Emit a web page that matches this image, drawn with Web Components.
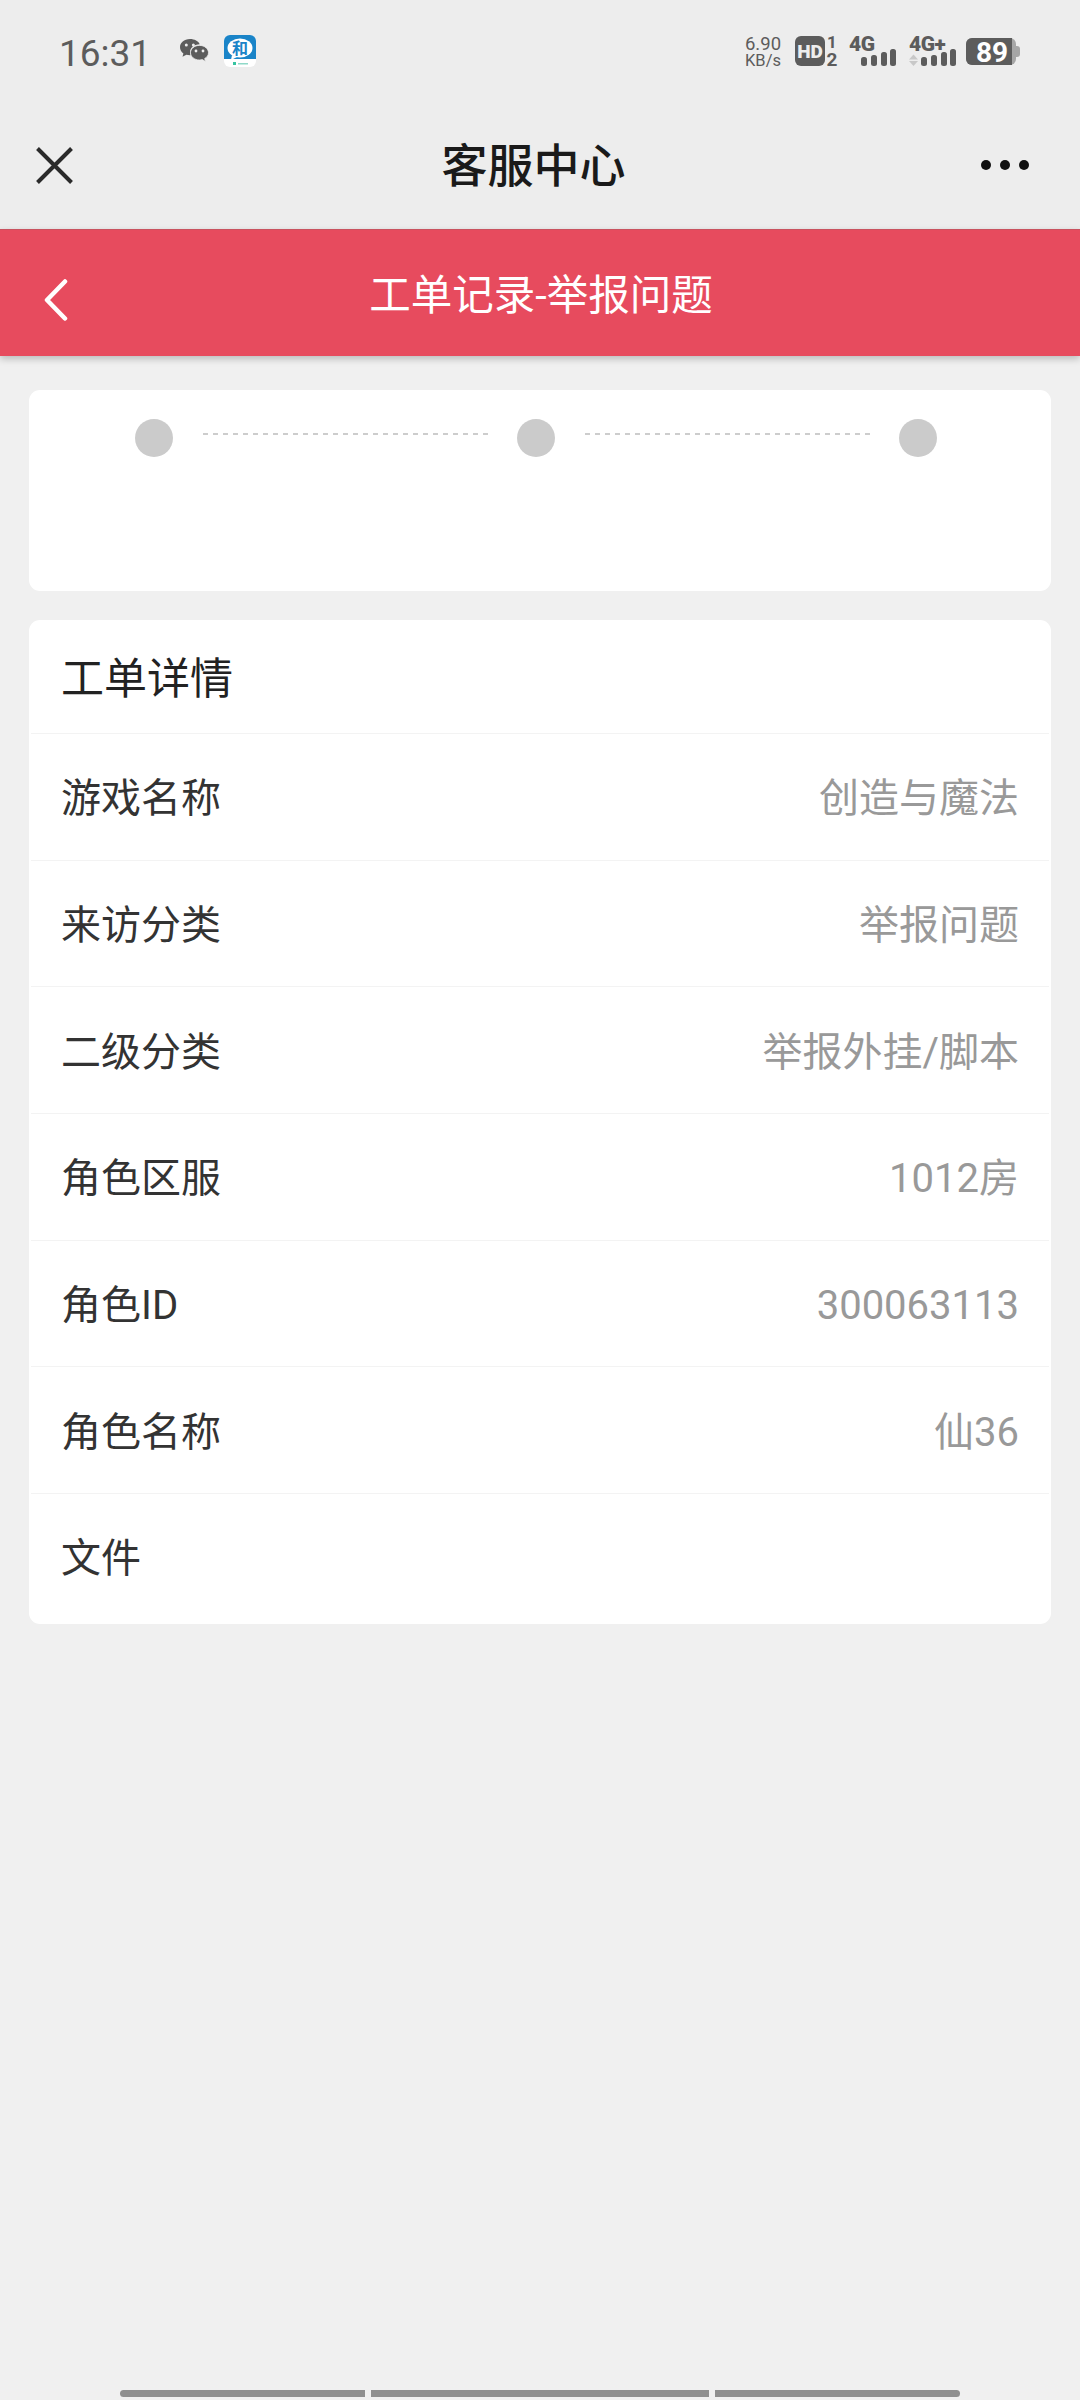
<!DOCTYPE html>
<html lang="zh-CN">
<head>
<meta charset="utf-8">
<title>客服中心</title>
<style>
  html, body { margin: 0; padding: 0; }
  body {
    width: 1080px;
    height: 2400px;
    overflow: hidden;
    background: #f0f0f0;
    font-family: Roboto, "Noto Sans CJK SC", sans-serif;
    display: flex;
    flex-direction: column;
  }
</style>
</head>
<body>

<template id="status-bar-template">
  <style>
    :host {
      display: flex;
      align-items: flex-start;
      height: 110px;
      box-sizing: border-box;
      padding: 35px 60px 0 60px;
      background: #ededed;
      color: #5c5c5c;
    }
    .time { font-size: 37px; line-height: 38px; width: 120px; margin-left: -1px; }
    .icons { display: flex; align-items: flex-start; }
    .wechat { width: 30px; height: 26px; margin: 4px 15px 0 0; }
    .hemu { width: 32px; height: 32px; }
    .right { margin-left: auto; width: 276px; height: 32px; }
    svg { display: block; overflow: visible; }
    text { font-family: Roboto, "Noto Sans CJK SC", sans-serif; }
  </style>
  <div class="time">16:31</div>
  <div class="icons">
    <svg class="wechat" viewBox="0 0 30 26">
      <path d="M11 0C5 0 1 3.700 1 8.200c0 2.600 1.400 4.700 3.400 6.200l-.9 3.400 3.900-2.100c1.100.3 2.200.5 3.500.5h.7c-.4-1-.5-1.800-.5-2.700C10.600 9 15 5.400 20.700 5.200 19.400 2.100 15.500 0 11 0z" fill="#5c5c5c"/>
      <circle cx="7.300" cy="6" r="1.500" fill="#ededed"/>
      <circle cx="14.400" cy="6" r="1.500" fill="#ededed"/>
      <path d="M20.500 6.400c-5.100 0-9 3.300-9 7.300s3.900 7.300 9 7.300c1 0 1.900-.1 2.800-.4l3.200 1.900-.8-3c2.500-1.300 3.800-3.400 3.800-5.800 0-4-3.900-7.300-9-7.300z" fill="#5c5c5c" stroke="#ededed" stroke-width=".8"/>
      <circle cx="17" cy="12" r="1.400" fill="#ededed"/>
      <circle cx="24" cy="12" r="1.400" fill="#ededed"/>
    </svg>
    <svg class="hemu" viewBox="0 0 32 32">
      <rect width="32" height="32" rx="6" fill="#ffffff"/>
      <path d="M0 6a6 6 0 0 1 6-6h20a6 6 0 0 1 6 6v18H0z" fill="#1a84c8"/>
      <ellipse cx="16" cy="13" rx="12.500" ry="9.500" fill="#fff"/>
      <path d="M8 20l-1 5 6-3z" fill="#fff"/>
      <text x="16" y="19" font-size="16" font-weight="700" fill="#1a84c8" text-anchor="middle">和</text>
      <rect x="9" y="27" width="3" height="3" fill="#37c4a0"/>
      <rect x="14" y="28" width="10" height="1.500" fill="#8fd9c8"/>
    </svg>
  </div>
  <svg class="right" viewBox="0 0 276 32">
    <text x="19" y="15" font-size="18.500" text-anchor="middle" fill="#5c5c5c">6.90</text>
    <text x="19" y="31" font-size="16.500" text-anchor="middle" fill="#5c5c5c">KB/s</text>

    <rect x="51" y="1" width="30" height="30" rx="6" fill="#5c5c5c"/>
    <text x="66" y="22.500" font-size="19" font-weight="900" text-anchor="middle" fill="#ededed">HD</text>
    <text x="88" y="13" font-size="17" font-weight="700" text-anchor="middle" fill="#5c5c5c">1</text>
    <text x="88" y="31" font-size="19" font-weight="700" text-anchor="middle" fill="#5c5c5c">2</text>

    <text x="105" y="16" font-size="21" font-weight="900" fill="#5c5c5c" letter-spacing="-.5">4G</text>
    <rect x="117" y="22" width="6" height="9" rx="2.500" fill="#5c5c5c"/>
    <rect x="127" y="20" width="6" height="11" rx="2.500" fill="#5c5c5c"/>
    <rect x="137" y="17" width="6" height="14" rx="2.500" fill="#5c5c5c"/>
    <rect x="146" y="14" width="6" height="17" rx="2.500" fill="#5c5c5c"/>

    <text x="165" y="16" font-size="21" font-weight="900" fill="#5c5c5c" letter-spacing="-.5">4G+</text>
    <path d="M165 24.500l4.500-5 4.500 5z" fill="#c8c8c8"/>
    <path d="M165 26l4.500 5 4.500-5z" fill="#c8c8c8"/>
    <rect x="177" y="22" width="6" height="9" rx="2.500" fill="#5c5c5c"/>
    <rect x="187" y="20" width="6" height="11" rx="2.500" fill="#5c5c5c"/>
    <rect x="197" y="17" width="6" height="14" rx="2.500" fill="#5c5c5c"/>
    <rect x="206" y="14" width="6" height="17" rx="2.500" fill="#5c5c5c"/>

    <rect x="222" y="3" width="50" height="27" rx="6" fill="#a6a6a6"/>
    <path d="M228 3h40v27h-40a6 6 0 0 1-6-6V9a6 6 0 0 1 6-6z" fill="#5c5c5c"/>
    <path d="M272 11h1a3 3 0 0 1 3 3v5a3 3 0 0 1-3 3h-1z" fill="#a6a6a6"/>
    <text x="248" y="27" font-size="28" font-weight="700" text-anchor="middle" fill="#fff">89</text>
  </svg>
</template>

<template id="nav-bar-template">
  <style>
    :host {
      display: flex;
      align-items: center;
      justify-content: space-between;
      height: 119px;
      box-sizing: border-box;
      padding: 0 51px 9px 36px;
      background: #ededed;
    }
    .title {
      font-size: 46px;
      font-weight: 500;
      line-height: 60px;
      color: #1a1a1a;
      margin: 2px 0 0 13px;
    }
    svg { display: block; }
  </style>
  <svg width="37" height="37" viewBox="0 0 37 37">
    <path d="M1.500 1.500l34 34M35.500 1.500l-34 34" stroke="#2a2a2a" stroke-width="4" fill="none"/>
  </svg>
  <div class="title"><slot></slot></div>
  <svg width="48" height="10" viewBox="0 0 48 10">
    <circle cx="5" cy="5" r="5" fill="#111"/>
    <circle cx="24" cy="5" r="5" fill="#111"/>
    <circle cx="43" cy="5" r="5" fill="#111"/>
  </svg>
</template>

<template id="page-header-template">
  <style>
    :host {
      display: flex;
      align-items: center;
      justify-content: center;
      position: relative;
      height: 127px;
      background: #e74b5e;
      box-shadow: 0 3px 7px rgba(0, 0, 0, 0.22), inset 0 1px 0 #c9525f;
      color: #fff;
    }
    .back { position: absolute; left: 44px; top: 50px; display: block; }
    .title { font-size: 41.500px; line-height: 56px; margin: 6px 0 0 2px; }
  </style>
  <svg class="back" width="24" height="42" viewBox="0 0 24 42">
    <path d="M21 2.500L3 21l18 18.500" stroke="#fff" stroke-width="4.500" stroke-linecap="round" stroke-linejoin="round" fill="none"/>
  </svg>
  <div class="title"><slot></slot></div>
</template>

<template id="step-card-template">
  <style>
    :host {
      display: flex;
      align-items: flex-start;
      box-sizing: border-box;
      height: 201px;
      margin: 34px 29px 0 29px;
      padding: 29px 0 0 106px;
      background: #fff;
      border-radius: 11px;
    }
    .dot { width: 38px; height: 38px; border-radius: 50%; background: #cbcbcb; flex: none; }
    .line {
      width: 284.500px;
      height: 2px;
      margin: 14px 29.500px 0 30px;
      background: repeating-linear-gradient(to right, #cdcdcd 0 5px, transparent 5px 10px);
      flex: none;
    }
  </style>
  <div class="dot"></div>
  <div class="line"></div>
  <div class="dot"></div>
  <div class="line"></div>
  <div class="dot"></div>
</template>

<template id="detail-card-template">
  <style>
    :host {
      display: block;
      margin: 29px 29px 0 29px;
      padding: 0 2px;
      background: #fff;
      border-radius: 11px;
      overflow: hidden;
    }
    .head {
      height: 113px;
      box-sizing: border-box;
      padding: 4px 30px 0 30px;
      display: flex;
      align-items: center;
      font-size: 43px;
      line-height: 58px;
      color: #222;
    }
  </style>
  <div class="head"><slot name="title"></slot></div>
  <slot></slot>
</template>

<template id="detail-row-template">
  <style>
    :host {
      display: flex;
      align-items: center;
      justify-content: space-between;
      height: 126.670px;
      box-sizing: border-box;
      padding: 5px 30px 0 30px;
      border-top: 1px solid #f3f3f3;
      font-size: 40px;
      line-height: 54px;
    }
    :host([last]) { height: 131px; padding-bottom: 4px; }
    .label { color: #333; }
    .value { color: #999; }
  </style>
  <div class="label"><slot name="label"></slot></div>
  <div class="value"><slot></slot></div>
</template>

<template id="home-indicator-template">
  <style>
    :host {
      display: flex;
      gap: 6px;
      margin: auto 120px 3px 120px;
      height: 7px;
    }
    div { height: 7px; background: #8f8f8f; }
    .a { width: 245px; border-radius: 4px 0 0 4px; }
    .b { width: 338px; }
    .c { width: 245px; border-radius: 0 4px 4px 0; }
  </style>
  <div class="a"></div>
  <div class="b"></div>
  <div class="c"></div>
</template>

<status-bar></status-bar>
<nav-bar>客服中心</nav-bar>
<page-header>工单记录-举报问题</page-header>
<step-card></step-card>
<detail-card>
  <span slot="title">工单详情</span>
  <detail-row><span slot="label">游戏名称</span>创造与魔法</detail-row>
  <detail-row><span slot="label">来访分类</span>举报问题</detail-row>
  <detail-row><span slot="label">二级分类</span>举报外挂/脚本</detail-row>
  <detail-row><span slot="label">角色区服</span>1012房</detail-row>
  <detail-row><span slot="label">角色ID</span>300063113</detail-row>
  <detail-row><span slot="label">角色名称</span>仙36</detail-row>
  <detail-row last><span slot="label">文件</span></detail-row>
</detail-card>
<home-indicator></home-indicator>

<script>
  (function () {
    const names = [
      "status-bar",
      "nav-bar",
      "page-header",
      "step-card",
      "detail-card",
      "detail-row",
      "home-indicator",
    ];

    names.forEach((name) => {
      const template = document.querySelector(`#${name}-template`);
      customElements.define(
        name,
        class extends HTMLElement {
          constructor() {
            super();
            this.attachShadow({ mode: "open" });
            this.shadowRoot.appendChild(template.content.cloneNode(true));
          }
        }
      );
    });
  })();
</script>
</body>
</html>
